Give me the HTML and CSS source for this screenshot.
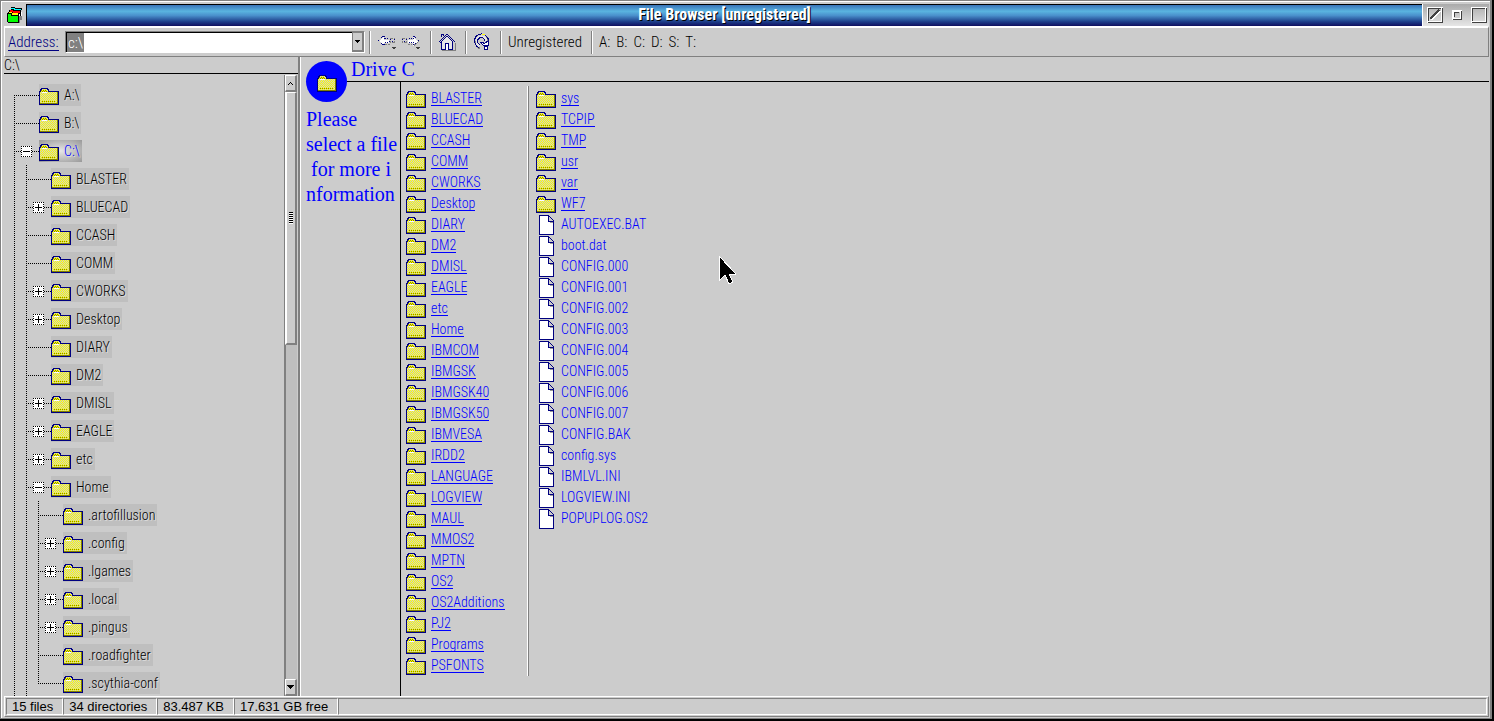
FILE: index.html
```
<!DOCTYPE html>
<html lang="en">
<head>
    <meta charset="UTF-8">
    <title>File Browser [unregistered]</title>
    <link rel="stylesheet" href="styles.css">
</head>
<body>
    <!-- shared icons -->
    <svg class="sprites" width="0" height="0" aria-hidden="true">
        <defs>
            <pattern id="dither" width="2" height="2" patternUnits="userSpaceOnUse">
                <rect width="2" height="2" fill="#ffff00"/>
                <rect width="1" height="1" fill="#cccccc"/>
                <rect x="1" y="1" width="1" height="1" fill="#cccccc"/>
            </pattern>
            <pattern id="dots" width="2" height="2" patternUnits="userSpaceOnUse">
                <rect width="1" height="1" fill="#808000"/>
                <rect x="1" y="1" width="1" height="1" fill="#808000"/>
            </pattern>
        </defs>
        <symbol id="folder" viewBox="0 0 20 17">
            <path d="M0 3h1V1h1V0h7v1h1v2h10v14H0z" fill="#000080"/>
            <path d="M1 4h1V2h1V1h5v1h1v2h9v11H1z" fill="url(#dither)"/>
            <path d="M2 2h6v2H2z" fill="url(#dots)"/>
            <path d="M3 4h5v1H3z" fill="#ffffff"/>
            <path d="M18 4h1v12H1v-1h17z" fill="#808000"/>
            <path d="M3 13.500h14" stroke="#808000" stroke-dasharray="1 1"/>
        </symbol>
        <symbol id="file" viewBox="0 0 15 20">
            <path d="M0 0h10v1h1v1h1v1h1v1h1v1h1v15H0z" fill="#000080"/>
            <path d="M1 1h8v6h5v12H1z" fill="#ffffff"/>
            <path d="M10 2h1v1h1v1h1v1h1v1h-4z" fill="#cccccc"/>
            <path d="M10 7h4v1h-3z" fill="#999999"/>
        </symbol>
    </svg>

    <div class="window">
        <header class="titlebar">
            <svg class="app-icon" width="22" height="22" viewBox="0 0 22 22">
                <path d="M7 3h4v1h7v2h-1v10h-3V8H7z" fill="#000"/>
                <path d="M7 4h4v1h6v1h-7V5H7z" fill="#00ffff"/>
                <path d="M15 8h1v7h-1zM17 8h1v7h-1z" fill="#fff"/>
                <path d="M5 6h4v1h7v3H5z" fill="#000"/>
                <path d="M6 6h3v1h7v2H9V8H6z" fill="#ff0000"/>
                <path d="M4 8h4v1h7v3H4z" fill="#000"/>
                <path d="M5 8h3v1h6v2H8v-1H5z" fill="#ffff00"/>
                <path d="M3 9h5v2h7v8H4v-1H3z" fill="#000"/>
                <path d="M4 10h3v2h7v6H4z" fill="#00ff00"/>
                <path d="M16 12h2v4h-2v3h-1v-7z" fill="#808080"/>
            </svg>
            <h1 class="title">File Browser [unregistered]</h1>
            <div class="window-buttons">
                <button type="button" class="win-btn" aria-label="Hide">
                    <svg width="16" height="16" viewBox="0 0 16 16" fill="none">
                        <path d="M1 1h14v14H1z" stroke="#fff" stroke-width="2"/>
                        <path d="M15.500 1v14.500H1M1.500 14V1.500H14" stroke="#404040"/>
                        <path d="M4 13l9-9" stroke="#fff" stroke-width="2"/>
                        <path d="M3 12l9-9" stroke="#404040" stroke-width="2"/>
                    </svg>
                </button>
                <button type="button" class="win-btn" aria-label="Restore">
                    <svg width="10" height="10" viewBox="0 0 10 10" fill="none">
                        <path d="M1 1h8v8H1z" stroke="#fff" stroke-width="2"/>
                        <path d="M9.500 1v8.500H1M2.500 7V2.500H7" stroke="#404040"/>
                    </svg>
                </button>
                <button type="button" class="win-btn" aria-label="Maximize">
                    <svg width="16" height="16" viewBox="0 0 16 16" fill="none">
                        <path d="M1 1h14v14H1z" stroke="#fff" stroke-width="2"/>
                        <path d="M15.500 1v14.500H1M1.500 14V1.500H14" stroke="#404040"/>
                    </svg>
                </button>
            </div>
        </header>

        <nav class="toolbar">
            <label class="address-label" for="address">Address:</label>
            <div class="combo">
                <div class="combo-text"><input type="text" id="address" value="c:\"></div>
                <button type="button" class="combo-btn" aria-label="Show addresses">
                    <svg width="5" height="3" viewBox="0 0 5 3"><path d="M0 0h5v1H4v1H3v1H2V2H1V1H0z"/></svg>
                </button>
            </div>
            <div class="tool-group arrows">
                <button type="button" class="tool" aria-label="Back">
                    <svg width="20" height="18" viewBox="0 0 20 18" fill="none">
                        <path d="M2 8l5-4v3h5v3H7v3z" fill="#fff"/>
                        <path d="M1 7.500l6-5v3h5M1 7.500l6 5v-3h5" stroke="#000080" stroke-dasharray="1 1"/>
                        <path d="M8 11.500h5M13.500 5.500h4v4h-4z" stroke="#808080" stroke-dasharray="2 1"/>
                        <path d="M13 6h1v1h-1zM15 8h1v1h-1zM17 6h1v1h-1zM12 8h1v1h-1z" fill="#000080"/>
                        <path d="M15 14h4l-2 3z" fill="#404040"/>
                    </svg>
                </button>
                <button type="button" class="tool" aria-label="Forward">
                    <svg width="20" height="18" viewBox="0 0 20 18" fill="none">
                        <path d="M17 8l-5-4v3H7v3h5v3z" fill="#fff"/>
                        <path d="M18 7.500l-6-5v3H7M18 7.500l-6 5v-3H7" stroke="#000080" stroke-dasharray="1 1"/>
                        <path d="M1.500 5.500h4v4h-4zM7 11.500h4M13 12.500l5-4" stroke="#808080" stroke-dasharray="2 1"/>
                        <path d="M1 6h1v1H1zM3 8h1v1H3zM5 6h1v1H5z" fill="#000080"/>
                        <path d="M15 14h4l-2 3z" fill="#404040"/>
                    </svg>
                </button>
            </div>
            <div class="tool-group">
                <button type="button" class="tool" aria-label="Home">
                    <svg width="18" height="18" viewBox="0 0 18 18" fill="none">
                        <path d="M4 17.500h13.500V10" stroke="#808080"/>
                        <path d="M3 9l6-6 6 6v7H3z" fill="#e6e6e6"/>
                        <path d="M.5 9.500L9 1l8 8M3.500 4V1.500h2V3M3.500 8v8.500h4v-6h3v6h4V8" stroke="#000080"/>
                        <path d="M2 10l7-7 6 6" stroke="#000080"/>
                        <path d="M8 11h2v6H8z" fill="#fff"/>
                    </svg>
                </button>
            </div>
            <div class="tool-group">
                <button type="button" class="tool" aria-label="Refresh">
                    <svg width="18" height="18" viewBox="0 0 18 18" fill="none">
                        <path d="M7 15.500a6 6 0 1 1 8-7" stroke="#808080" stroke-width="2"/>
                        <path d="M6 14.500A7 7 0 1 1 15.500 8v2" stroke="#000080"/>
                        <path d="M6.500 13A5 5 0 1 1 13.500 8" stroke="#e6e6e6" stroke-width="2"/>
                        <path d="M7 11.500A3.500 3.500 0 1 1 11.500 8" stroke="#000080"/>
                        <path d="M9 1h3v1H9z" fill="#ffff00"/>
                        <path d="M7.500 9.500h2l2 1 4-3v5h-5z" fill="#fff" stroke="#000080"/>
                        <path d="M11.500 13.500h3v3h-3z" fill="#fff" stroke="#000080"/>
                    </svg>
                </button>
            </div>
            <div class="tool-group"><span>Unregistered</span></div>
            <div class="tool-group drives">
                <a href="#">A:</a>
                <a href="#">B:</a>
                <a href="#">C:</a>
                <a href="#">D:</a>
                <a href="#">S:</a>
                <a href="#">T:</a>
            </div>
        </nav>

        <main class="content">
            <aside class="sidebar">
                <div class="path">C:\</div>
                <div class="tree-area">
                    <ul class="tree root">
                        <li><div class="row"><span class="branch"></span><a class="node" href="#"><svg class="folder"><use href="#folder"/></svg>A:\</a></div></li>
                        <li><div class="row"><span class="branch"></span><a class="node" href="#"><svg class="folder"><use href="#folder"/></svg>B:\</a></div></li>
                        <li>
                            <div class="row"><span class="branch"><button type="button" class="toggle open" aria-label="Collapse"></button></span><a class="node selected" href="#"><svg class="folder"><use href="#folder"/></svg>C:\</a></div>
                            <ul class="tree">
                                <li><div class="row"><span class="branch"></span><a class="node" href="#"><svg class="folder"><use href="#folder"/></svg>BLASTER</a></div></li>
                                <li><div class="row"><span class="branch"><button type="button" class="toggle" aria-label="Expand"></button></span><a class="node" href="#"><svg class="folder"><use href="#folder"/></svg>BLUECAD</a></div></li>
                                <li><div class="row"><span class="branch"></span><a class="node" href="#"><svg class="folder"><use href="#folder"/></svg>CCASH</a></div></li>
                                <li><div class="row"><span class="branch"></span><a class="node" href="#"><svg class="folder"><use href="#folder"/></svg>COMM</a></div></li>
                                <li><div class="row"><span class="branch"><button type="button" class="toggle" aria-label="Expand"></button></span><a class="node" href="#"><svg class="folder"><use href="#folder"/></svg>CWORKS</a></div></li>
                                <li><div class="row"><span class="branch"><button type="button" class="toggle" aria-label="Expand"></button></span><a class="node" href="#"><svg class="folder"><use href="#folder"/></svg>Desktop</a></div></li>
                                <li><div class="row"><span class="branch"></span><a class="node" href="#"><svg class="folder"><use href="#folder"/></svg>DIARY</a></div></li>
                                <li><div class="row"><span class="branch"></span><a class="node" href="#"><svg class="folder"><use href="#folder"/></svg>DM2</a></div></li>
                                <li><div class="row"><span class="branch"><button type="button" class="toggle" aria-label="Expand"></button></span><a class="node" href="#"><svg class="folder"><use href="#folder"/></svg>DMISL</a></div></li>
                                <li><div class="row"><span class="branch"><button type="button" class="toggle" aria-label="Expand"></button></span><a class="node" href="#"><svg class="folder"><use href="#folder"/></svg>EAGLE</a></div></li>
                                <li><div class="row"><span class="branch"><button type="button" class="toggle" aria-label="Expand"></button></span><a class="node" href="#"><svg class="folder"><use href="#folder"/></svg>etc</a></div></li>
                                <li>
                                    <div class="row"><span class="branch"><button type="button" class="toggle open" aria-label="Collapse"></button></span><a class="node" href="#"><svg class="folder"><use href="#folder"/></svg>Home</a></div>
                                    <ul class="tree">
                                        <li><div class="row"><span class="branch"></span><a class="node" href="#"><svg class="folder"><use href="#folder"/></svg>.artofillusion</a></div></li>
                                        <li><div class="row"><span class="branch"><button type="button" class="toggle" aria-label="Expand"></button></span><a class="node" href="#"><svg class="folder"><use href="#folder"/></svg>.config</a></div></li>
                                        <li><div class="row"><span class="branch"><button type="button" class="toggle" aria-label="Expand"></button></span><a class="node" href="#"><svg class="folder"><use href="#folder"/></svg>.lgames</a></div></li>
                                        <li><div class="row"><span class="branch"><button type="button" class="toggle" aria-label="Expand"></button></span><a class="node" href="#"><svg class="folder"><use href="#folder"/></svg>.local</a></div></li>
                                        <li><div class="row"><span class="branch"><button type="button" class="toggle" aria-label="Expand"></button></span><a class="node" href="#"><svg class="folder"><use href="#folder"/></svg>.pingus</a></div></li>
                                        <li><div class="row"><span class="branch"></span><a class="node" href="#"><svg class="folder"><use href="#folder"/></svg>.roadfighter</a></div></li>
                                        <li class="last"><div class="row"><span class="branch"></span><a class="node" href="#"><svg class="folder"><use href="#folder"/></svg>.scythia-conf</a></div></li>
                                    </ul>
                                </li>
                            </ul>
                        </li>
                    </ul>
                    <div class="scrollbar">
                        <button type="button" class="scroll-btn" aria-label="Scroll up">
                            <svg width="5" height="3" viewBox="0 0 5 3"><path d="M0 3V2h1V1h1V0h1v1h1v1h1v1H4V2H3V1H2v1H1v1z"/></svg>
                        </button>
                        <div class="thumb"><span class="grip"></span></div>
                        <div class="trough"></div>
                        <button type="button" class="scroll-btn" aria-label="Scroll down">
                            <svg width="7" height="4" viewBox="0 0 7 4"><path d="M0 0h7v1H6v1H5v1H4v1H3V3H2V2H1V1H0z"/></svg>
                        </button>
                    </div>
                </div>
            </aside>

            <section class="folder-view">
                <div class="info">
                    <div class="badge"><svg class="folder"><use href="#folder"/></svg></div>
                    <p class="hint">Please<br>select a file<br>&nbsp;for more i<br>nformation</p>
                </div>
                <div class="main-pane">
                    <h2 class="heading">Drive C</h2>
                    <div class="files">
                        <ul class="column">
                            <li><a href="#"><svg class="folder"><use href="#folder"/></svg><span>BLASTER</span></a></li>
                            <li><a href="#"><svg class="folder"><use href="#folder"/></svg><span>BLUECAD</span></a></li>
                            <li><a href="#"><svg class="folder"><use href="#folder"/></svg><span>CCASH</span></a></li>
                            <li><a href="#"><svg class="folder"><use href="#folder"/></svg><span>COMM</span></a></li>
                            <li><a href="#"><svg class="folder"><use href="#folder"/></svg><span>CWORKS</span></a></li>
                            <li><a href="#"><svg class="folder"><use href="#folder"/></svg><span>Desktop</span></a></li>
                            <li><a href="#"><svg class="folder"><use href="#folder"/></svg><span>DIARY</span></a></li>
                            <li><a href="#"><svg class="folder"><use href="#folder"/></svg><span>DM2</span></a></li>
                            <li><a href="#"><svg class="folder"><use href="#folder"/></svg><span>DMISL</span></a></li>
                            <li><a href="#"><svg class="folder"><use href="#folder"/></svg><span>EAGLE</span></a></li>
                            <li><a href="#"><svg class="folder"><use href="#folder"/></svg><span>etc</span></a></li>
                            <li><a href="#"><svg class="folder"><use href="#folder"/></svg><span>Home</span></a></li>
                            <li><a href="#"><svg class="folder"><use href="#folder"/></svg><span>IBMCOM</span></a></li>
                            <li><a href="#"><svg class="folder"><use href="#folder"/></svg><span>IBMGSK</span></a></li>
                            <li><a href="#"><svg class="folder"><use href="#folder"/></svg><span>IBMGSK40</span></a></li>
                            <li><a href="#"><svg class="folder"><use href="#folder"/></svg><span>IBMGSK50</span></a></li>
                            <li><a href="#"><svg class="folder"><use href="#folder"/></svg><span>IBMVESA</span></a></li>
                            <li><a href="#"><svg class="folder"><use href="#folder"/></svg><span>IRDD2</span></a></li>
                            <li><a href="#"><svg class="folder"><use href="#folder"/></svg><span>LANGUAGE</span></a></li>
                            <li><a href="#"><svg class="folder"><use href="#folder"/></svg><span>LOGVIEW</span></a></li>
                            <li><a href="#"><svg class="folder"><use href="#folder"/></svg><span>MAUL</span></a></li>
                            <li><a href="#"><svg class="folder"><use href="#folder"/></svg><span>MMOS2</span></a></li>
                            <li><a href="#"><svg class="folder"><use href="#folder"/></svg><span>MPTN</span></a></li>
                            <li><a href="#"><svg class="folder"><use href="#folder"/></svg><span>OS2</span></a></li>
                            <li><a href="#"><svg class="folder"><use href="#folder"/></svg><span>OS2Additions</span></a></li>
                            <li><a href="#"><svg class="folder"><use href="#folder"/></svg><span>PJ2</span></a></li>
                            <li><a href="#"><svg class="folder"><use href="#folder"/></svg><span>Programs</span></a></li>
                            <li><a href="#"><svg class="folder"><use href="#folder"/></svg><span>PSFONTS</span></a></li>
                        </ul>
                        <ul class="column">
                            <li><a href="#"><svg class="folder"><use href="#folder"/></svg><span>sys</span></a></li>
                            <li><a href="#"><svg class="folder"><use href="#folder"/></svg><span>TCPIP</span></a></li>
                            <li><a href="#"><svg class="folder"><use href="#folder"/></svg><span>TMP</span></a></li>
                            <li><a href="#"><svg class="folder"><use href="#folder"/></svg><span>usr</span></a></li>
                            <li><a href="#"><svg class="folder"><use href="#folder"/></svg><span>var</span></a></li>
                            <li><a href="#"><svg class="folder"><use href="#folder"/></svg><span>WF7</span></a></li>
                            <li><a class="plain" href="#"><svg class="file"><use href="#file"/></svg><span>AUTOEXEC.BAT</span></a></li>
                            <li><a class="plain" href="#"><svg class="file"><use href="#file"/></svg><span>boot.dat</span></a></li>
                            <li><a class="plain" href="#"><svg class="file"><use href="#file"/></svg><span>CONFIG.000</span></a></li>
                            <li><a class="plain" href="#"><svg class="file"><use href="#file"/></svg><span>CONFIG.001</span></a></li>
                            <li><a class="plain" href="#"><svg class="file"><use href="#file"/></svg><span>CONFIG.002</span></a></li>
                            <li><a class="plain" href="#"><svg class="file"><use href="#file"/></svg><span>CONFIG.003</span></a></li>
                            <li><a class="plain" href="#"><svg class="file"><use href="#file"/></svg><span>CONFIG.004</span></a></li>
                            <li><a class="plain" href="#"><svg class="file"><use href="#file"/></svg><span>CONFIG.005</span></a></li>
                            <li><a class="plain" href="#"><svg class="file"><use href="#file"/></svg><span>CONFIG.006</span></a></li>
                            <li><a class="plain" href="#"><svg class="file"><use href="#file"/></svg><span>CONFIG.007</span></a></li>
                            <li><a class="plain" href="#"><svg class="file"><use href="#file"/></svg><span>CONFIG.BAK</span></a></li>
                            <li><a class="plain" href="#"><svg class="file"><use href="#file"/></svg><span>config.sys</span></a></li>
                            <li><a class="plain" href="#"><svg class="file"><use href="#file"/></svg><span>IBMLVL.INI</span></a></li>
                            <li><a class="plain" href="#"><svg class="file"><use href="#file"/></svg><span>LOGVIEW.INI</span></a></li>
                            <li><a class="plain" href="#"><svg class="file"><use href="#file"/></svg><span>POPUPLOG.OS2</span></a></li>
                        </ul>
                    </div>
                </div>
            </section>
        </main>

        <footer class="statusbar">
            <span>15 files</span>
            <span>34 directories</span>
            <span>83.487 KB</span>
            <span>17.631 GB free</span>
            <span class="fill"></span>
        </footer>
    </div>

    <svg class="pointer" width="18" height="30" viewBox="0 0 18 30">
        <path d="M1 1v25l6-6 4 9 4-2-4-8h7z" fill="#000" stroke="#fff"/>
    </svg>
</body>
</html>
```
FILE: styles.css
```
* {
    margin: 0;
    padding: 0;
    box-sizing: border-box;
}

body {
    height: 100vh;
    padding: 0 2px 2px 0;
    background: #000;
    color: #000;
    font-family: 'Roboto Condensed', 'Liberation Sans Narrow', Roboto, sans-serif;
    font-size: 14px;
    font-weight: 300;
    overflow: hidden;
}

button {
    border: none;
    background: none;
    display: flex;
    align-items: center;
    justify-content: center;
}

svg {
    display: block;
    flex-shrink: 0;
    shape-rendering: crispEdges;
}

ul {
    list-style: none;
}

a {
    color: inherit;
    text-decoration: none;
}

.sprites {
    position: absolute;
}

.folder {
    width: 20px;
    height: 17px;
}

.file {
    width: 15px;
    height: 20px;
    margin: 0 2px 0 3px;
}

.window {
    height: 100%;
    display: flex;
    flex-direction: column;
    background: #ccc;
    border: 1px solid #808080;
    border-right-width: 2px;
    box-shadow: inset 1px 1px #fff;
    padding: 3px 1px 1px 3px;
}

/* title bar */
.titlebar {
    height: 22px;
    display: flex;
}

.title {
    flex: 1;
    border-top: 1px solid #000;
    border-left: 1px solid #000;
    background: linear-gradient(#3a74b8, #5ab4e0 30%, #4a90cc 50%, #1c3c88 80%, #101060);
    color: #fff;
    font-size: 16px;
    font-weight: bold;
    line-height: 19px;
    text-align: center;
    text-shadow: 1px 1px #000;
}

.window-buttons {
    width: 67px;
    padding: 0 2px 0 4px;
    display: flex;
    align-items: center;
    justify-content: space-between;
    border-left: 1px solid #fff;
    background: linear-gradient(#aaa, #e6e6e6);
}

/* toolbar */
.toolbar {
    height: 31px;
    display: flex;
    align-items: center;
    padding-left: 3px;
    border: 1px solid #808080;
    border-top: 2px solid #fff;
    border-left-color: #fff;
    font-size: 15px;
}

.address-label {
    color: #000080;
    border-bottom: 1px solid #000080;
    line-height: 16px;
    width: 51px;
}

.combo {
    width: 300px;
    height: 22px;
    margin-left: 6px;
    display: flex;
    border: 1px solid #808080;
    border-right-color: #fff;
    border-bottom-color: #fff;
    background: #fff;
}

.combo-text {
    flex: 1;
    min-width: 0;
    border-top: 1px solid #000;
    border-left: 1px solid #000;
}

.combo-text input {
    width: 17px;
    height: 19px;
    padding-left: 1px;
    border: none;
    outline: none;
    background: #808080;
    color: #fff;
    font: inherit;
}

.combo-btn {
    width: 12px;
    background: #ccc;
    border: 1px solid #fff;
    border-right: 2px solid #808080;
    border-bottom: 2px solid #808080;
    outline: 1px solid #808080;
    outline-offset: -1px;
}

.tool-group {
    height: 23px;
    margin-left: 9px;
    padding-left: 7px;
    display: flex;
    align-items: center;
    border-left: 1px solid #808080;
    box-shadow: inset 1px 0 #fff;
}

.tool-group.arrows {
    gap: 4px;
    margin-left: 4px;
}

.tool-group.drives {
    gap: 6px;
}

/* content */
.content {
    flex: 1;
    min-height: 0;
    display: flex;
}

.sidebar {
    width: 296px;
    display: flex;
    flex-direction: column;
    border-right: 2px solid #808080;
}

.path {
    height: 17px;
    line-height: 17px;
    border-bottom: 1px solid #000;
}

.tree-area {
    flex: 1;
    min-height: 0;
    display: flex;
}

.tree.root {
    flex: 1;
    padding: 7px 0 0 10px;
    overflow: hidden;
}

/* dotted guide on the left of every item */
.tree > li {
    background: repeating-linear-gradient(#000 0 1px, transparent 1px 2px) 0 0 / 1px 100% no-repeat;
}

.tree.root > li:first-child {
    background-position: 0 14px;
}

.tree > li.last {
    background-size: 1px 14px;
}

.tree .tree {
    padding-left: 12px;
}

.row {
    height: 28px;
    display: flex;
    align-items: center;
}

.branch {
    width: 25px;
    height: 11px;
    padding-left: 7px;
    background: repeating-linear-gradient(90deg, #000 0 1px, transparent 1px 2px) 0 5px / 100% 1px no-repeat;
}

.toggle {
    width: 11px;
    height: 11px;
    border: 1px dotted #000;
    background:
        linear-gradient(#000, #000) center / 7px 1px no-repeat,
        linear-gradient(#000, #000) center / 1px 7px no-repeat,
        #fff;
}

.toggle.open {
    background: linear-gradient(#000, #000) center / 7px 1px no-repeat, #fff;
}

.node {
    height: 22px;
    display: flex;
    align-items: center;
    gap: 5px;
    padding-right: 2px;
    background: #bfbfbf;
    text-shadow: 1px 1px #ddd;
}

.node .folder {
    margin-top: 3px;
}

.node.selected {
    color: #0000ff;
    background: radial-gradient(#e6e6e6, #999);
}

.scrollbar {
    width: 13px;
    margin: 1px 1px 0 0;
    display: flex;
    flex-direction: column;
    border-left: 1px solid #808080;
}

.scroll-btn {
    height: 17px;
    background: #ccc;
    border: 1px solid #fff;
    border-right: 2px solid #808080;
    border-bottom: 2px solid #808080;
}

.thumb {
    flex: 252;
    display: flex;
    align-items: center;
    justify-content: center;
    background: #ccc;
    border: 2px solid #808080;
    border-top: 1px solid #fff;
    border-left: 2px solid #fff;
}

.grip {
    width: 4px;
    height: 12px;
    background: repeating-linear-gradient(#000 0 1px, #fff 1px 2px);
}

.trough {
    flex: 336;
    background: #bfbfbf;
    border-left: 1px solid #808080;
}

.folder-view {
    flex: 1;
    display: flex;
    color: #0000ff;
    border-left: 1px solid #fff;
    font-family: 'Liberation Serif', serif;
    font-size: 20px;
}

.info {
    width: 99px;
    padding: 4px 0 0 5px;
}

.badge {
    width: 41px;
    height: 41px;
    display: flex;
    align-items: center;
    justify-content: center;
    background: #0000ff;
    border-radius: 50%;
    padding-top: 4px;
}

.hint {
    margin-top: 5px;
    line-height: 25px;
    white-space: nowrap;
}

.main-pane {
    flex: 1;
    display: flex;
    flex-direction: column;
}

/* the title and its rule reach back over the info column */
.heading {
    height: 25px;
    margin-left: -53px;
    padding-left: 4px;
    border-bottom: 1px solid #000;
    font-size: 20px;
    font-weight: normal;
    line-height: 24px;
}

.files {
    flex: 1;
    display: flex;
    align-items: flex-start;
    padding: 4px 0 0 5px;
    border-left: 1px solid #000;
    font-family: 'Roboto Condensed', 'Liberation Sans Narrow', Roboto, sans-serif;
    font-size: 14px;
}

.column {
    padding-top: 2px;
}

.column:first-child {
    width: 123px;
    border-right: 1px solid #808080;
    box-shadow: inset -1px 0 #fff;
}

.column:last-child {
    padding-left: 7px;
}

.column li {
    height: 21px;
}

.column a {
    height: 21px;
    display: flex;
    align-items: center;
    gap: 5px;
}

.column .folder {
    margin-top: 2px;
}

.column span {
    line-height: 14px;
    border-bottom: 1px solid #0000ff;
}

.column .plain span {
    border-bottom-color: transparent;
}

/* status bar */
.statusbar {
    height: 21px;
    padding: 1px;
    display: flex;
    border: 1px solid #808080;
    border-top-color: #fff;
    border-left-color: #fff;
    font-family: 'Liberation Sans', sans-serif;
    font-size: 13px;
    line-height: 16px;
}

.statusbar span {
    padding: 0 9px 0 5px;
    border: 1px solid #fff;
    border-top-color: #808080;
    border-left-color: #808080;
}

.statusbar .fill {
    flex: 1;
}

.pointer {
    position: absolute;
    left: 718px;
    top: 255px;
}
```
